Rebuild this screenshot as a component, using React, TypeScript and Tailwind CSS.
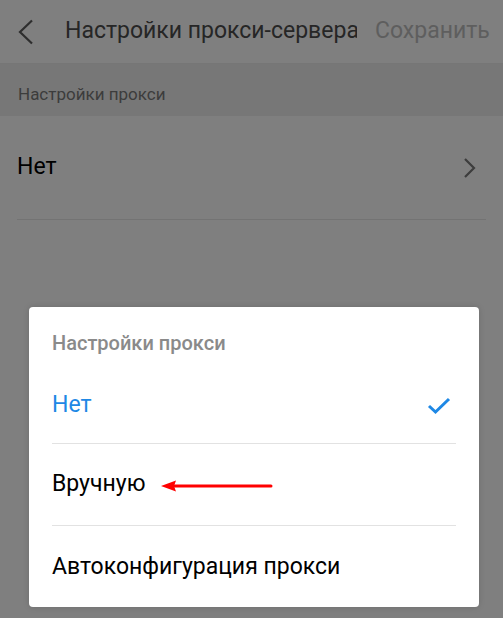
export default function App() {
  return (
    <div
      className="relative h-[618px] w-[503px] overflow-hidden bg-[#7f7f7f]"
      style={{ fontFamily: "Roboto, 'Noto Sans', sans-serif" }}
    >
      <header className="flex h-[64px] items-center border-b border-[#767676]">
        <div className="flex w-[65px] shrink-0 justify-start pl-[17px]">
          <svg width="18" height="26" viewBox="0 0 18 26">
            <path d="M15 1.5 L3 13 L15 24.5" fill="none" stroke="#2e2e2e" strokeWidth="2.2" />
          </svg>
        </div>
        <div className="w-[292px] shrink-0 overflow-hidden whitespace-nowrap text-[23px] text-[#262626]">
          Настройки прокси-сервера
        </div>
        <div className="ml-[18px] whitespace-nowrap text-[23px] text-[#5e5e5e]">Сохранить</div>
      </header>

      <div className="flex h-[52px] items-center bg-[#777777] px-[18px] pt-[10px] text-[17px] text-[#3c3c3c]">
        Настройки прокси
      </div>

      <div className="mx-[17px] flex h-[104px] items-center justify-between border-b border-[#737373]">
        <span className="text-[23px] text-black">Нет</span>
        <svg width="14" height="22" viewBox="0 0 14 22" className="mr-[9px]">
          <path d="M2 2 L11 11 L2 20" fill="none" stroke="#3d3d3d" strokeWidth="2.2" />
        </svg>
      </div>

      <div className="absolute left-[29px] top-[307px] w-[450px] rounded-[4px] bg-white px-[23px] shadow-[0_0_6px_rgba(0,0,0,0.15)]">
        <div className="flex h-[70px] items-center pt-[2px] text-[20px] font-medium text-[#8a8a8a]">
          Настройки прокси
        </div>
        <div className="flex h-[67px] items-center justify-between border-b border-[#e2e2e2] pb-[9px]">
          <span className="text-[23px] text-[#1e88e5]">Нет</span>
          <svg width="24" height="18" viewBox="0 0 24 18" className="mr-[5px]">
            <path d="M2 9 L8.5 15 L22 2" fill="none" stroke="#1e88e5" strokeWidth="3" />
          </svg>
        </div>
        <div className="flex h-[82px] items-center border-b border-[#e2e2e2]">
          <span className="text-[23px] text-black">Вручную</span>
          <svg width="112" height="12" viewBox="0 0 112 12" className="ml-[16px] mt-[2px]">
            <path d="M0 6 L15 0.5 L13 6 L15 11.5 Z" fill="#ff0000" />
            <path d="M12 6 L110 6" stroke="#ff0000" strokeWidth="3" strokeLinecap="round" />
          </svg>
        </div>
        <div className="flex h-[81px] items-center pt-[2px]">
          <span className="text-[23px] text-black">Автоконфигурация прокси</span>
        </div>
      </div>
    </div>
  );
}
